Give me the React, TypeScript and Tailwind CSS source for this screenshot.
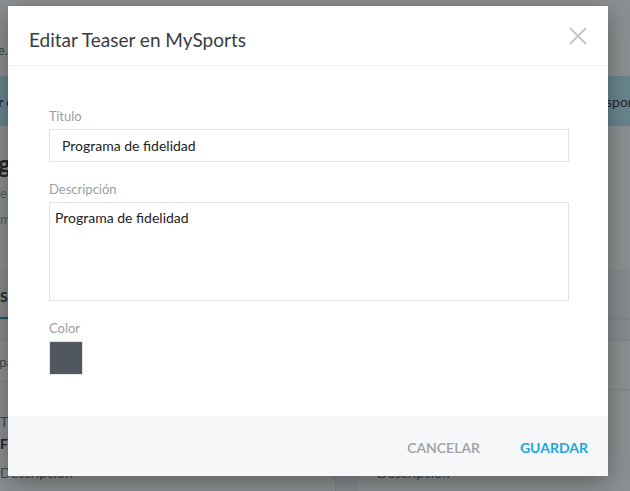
import { X } from 'lucide-react';

const font = { fontFamily: 'Lato, "Noto Sans", sans-serif' };

// page that sits behind the dialog
const BackPage = () => (
  <div className="flex h-[491px] flex-col overflow-hidden bg-white text-[#2b3035]" style={font}>
    <div className="flex h-[76px] items-end pb-4 text-[13px] text-[#6b7176]">
      <span className="-ml-[2px]">e...</span>
    </div>
    <div className="flex h-[50px] items-center justify-between bg-[#b4e9f4] text-[14px]">
      <span className="-ml-[2px] font-bold">r cambios</span>
      <span className="-mr-[20px] w-[44px] overflow-hidden whitespace-nowrap">sporte</span>
    </div>
    <div className="flex h-[144px] flex-col pt-6">
      <span className="-ml-[2px] text-[24px] leading-7 font-bold">gr</span>
      <span className="mt-[6px] text-[13px] text-[#8a9096]">e</span>
      <span className="mt-[6px] text-[13px] text-[#8a9096]">m</span>
    </div>
    <div className="flex h-[50px] items-end border-b border-[#e2e5e8] bg-[#f4f5f6]">
      <span className="border-b-2 border-[#1c96b8] pb-[10px] text-[14px] font-bold">Sp</span>
    </div>
    <div className="h-[20px] bg-[#f4f5f6]" />
    <div className="flex flex-1">
      <div className="flex w-[336px] flex-col border-r border-[#e2e5e8]">
        <div className="flex h-[42px] items-center border-y border-[#e2e5e8] text-[14px] text-[#6b7176]">
          <span className="-ml-[1px]">página</span>
        </div>
        <div className="flex flex-col pt-[30px] text-[14px] leading-[20px]">
          <span className="text-[#6b7176]">Título</span>
          <span className="mt-[2px] font-bold">Fidelidad</span>
          <span className="mt-[9px] text-[#6b7176]">Descripción</span>
        </div>
      </div>
      <div className="w-[20px] bg-[#f4f5f6]" />
      <div className="flex flex-1 flex-col border-l border-[#e2e5e8] pl-5">
        <div className="h-[50px] border-y border-[#e2e5e8]" />
        <div className="flex flex-col pt-[73px] text-[14px] leading-[20px] text-[#6b7176]">
          <span>Descripción</span>
        </div>
      </div>
    </div>
  </div>
);

const Field = ({ label, children }: { label: string; children: React.ReactNode }) => (
  <div className="flex flex-col">
    <label className="mb-[4px] text-[13px] leading-[18px] text-[#9a9ea2]">{label}</label>
    {children}
  </div>
);

export default function App() {
  return (
    <div className="relative h-[491px] w-[630px] overflow-hidden">
      <BackPage />
      <div className="absolute inset-0 bg-[#1c2125]/50" />

      <div
        className="absolute top-[6px] left-[8px] flex w-[600px] flex-col bg-white shadow-[0_6px_24px_rgba(0,0,0,0.35)]"
        style={font}
      >
        <div className="flex h-[60px] items-center justify-between border-b border-[#eceef0] pr-[15px] pl-[21px]">
          <h2 className="pt-[10px] text-[19px] text-[#363d44]">Editar Teaser en MySports</h2>
          <X className="h-[30px] w-[30px] text-[#c4c6c8]" strokeWidth={1.5} />
        </div>

        <div className="flex flex-col gap-[18px] pt-[41px] pr-[39px] pb-[41px] pl-[41px]">
          <Field label="Título">
            <div className="flex h-[33px] items-center border border-[#dfe3e6] px-3 text-[14px] text-[#1d2226]">
              Programa de fidelidad
            </div>
          </Field>
          <Field label="Descripción">
            <div className="h-[99px] border border-[#dfe3e6] px-[5px] py-[4px] text-[14px] text-[#1d2226]">
              Programa de fidelidad
            </div>
          </Field>
          <Field label="Color">
            <div className="h-[34px] w-[34px] border border-[#dfe3e6] bg-[#50575f]" />
          </Field>
        </div>

        <div className="flex h-[60px] items-center justify-end gap-[40px] border-t border-[#eef0f2] bg-[#f6f7f9] pt-[2px] pr-[20px]">
          <button className="text-[14px] font-semibold text-[#9ea1a4]">CANCELAR</button>
          <button className="text-[14px] font-bold text-[#1aa7dc]">GUARDAR</button>
        </div>
      </div>
    </div>
  );
}
